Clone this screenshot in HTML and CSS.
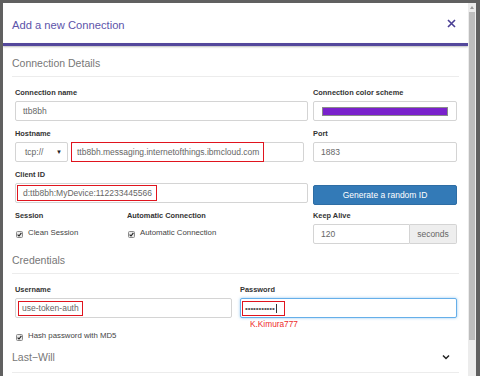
FILE: index.html
```html
<!DOCTYPE html>
<html lang="en">
  <head>
    <meta charset="UTF-8" />
    <title>Add a new Connection</title>
    <link rel="stylesheet" href="styles.css">
  </head>
  <body>
    <div class="window">
      <div class="modal">
        <div class="modal-header">
          <span class="title">Add a new Connection</span>
          <svg class="close" width="9" height="9" viewBox="0 0 9 9">
            <path d="M1 1L8 8M8 1L1 8" stroke="#4a3f94" stroke-width="1.6" fill="none" />
          </svg>
        </div>
        <div class="header-bar"></div>

        <div class="modal-body">
          <div class="section-title first">Connection Details</div>

          <div class="form details">
            <div class="row">
              <div class="group">
                <div class="label">Connection name</div>
                <div class="field">ttb8bh</div>
              </div>
              <div class="group">
                <div class="label">Connection color scheme</div>
                <div class="field color-field"><span class="swatch"></span></div>
              </div>
            </div>

            <div class="row">
              <div class="group">
                <div class="label">Hostname</div>
                <div class="host-line">
                  <div class="field select">tcp://<span class="caret">▼</span></div>
                  <div class="field host">
                    <span class="mark mark-host">ttb8bh.messaging.internetofthings.ibmcloud.com</span>
                  </div>
                </div>
              </div>
              <div class="group">
                <div class="label">Port</div>
                <div class="field">1883</div>
              </div>
            </div>

            <div class="row">
              <div class="group">
                <div class="label">Client ID</div>
                <div class="field client">
                  <span class="mark mark-client">d:ttb8bh:MyDevice:112233445566</span>
                </div>
              </div>
              <div class="group">
                <button class="btn-generate">Generate a random ID</button>
              </div>
            </div>

            <div class="row last">
              <div class="session-cols">
                <div class="group">
                  <div class="label">Session</div>
                  <div class="check-row">
                    <svg class="check" width="7" height="7" viewBox="0 0 7 7">
                      <rect x="0.5" y="0.5" width="6" height="6" rx="1" fill="#e9e9e9" stroke="#8a8a8a" />
                      <path d="M1.6 3.6L3 5L5.4 1.8" stroke="#222" stroke-width="1.1" fill="none" />
                    </svg>
                    Clean Session
                  </div>
                </div>
                <div class="group">
                  <div class="label">Automatic Connection</div>
                  <div class="check-row">
                    <svg class="check" width="7" height="7" viewBox="0 0 7 7">
                      <rect x="0.5" y="0.5" width="6" height="6" rx="1" fill="#e9e9e9" stroke="#8a8a8a" />
                      <path d="M1.6 3.6L3 5L5.4 1.8" stroke="#222" stroke-width="1.1" fill="none" />
                    </svg>
                    Automatic Connection
                  </div>
                </div>
              </div>
              <div class="group">
                <div class="label">Keep Alive</div>
                <div class="input-group">
                  <div class="field keep">120</div>
                  <div class="addon">seconds</div>
                </div>
              </div>
            </div>
          </div>

          <div class="section-title">Credentials</div>

          <div class="form credentials">
            <div class="row cred-row">
              <div class="group">
                <div class="label">Username</div>
                <div class="field user">
                  <span class="mark mark-user">use-token-auth</span>
                </div>
              </div>
              <div class="group">
                <div class="label">Password</div>
                <div class="field pass">
                  <span class="mark mark-pass">•••••••••••<span class="cursor"></span></span>
                </div>
                <div class="note">K.Kimura777</div>
              </div>
            </div>
            <div class="check-row hash">
              <svg class="check" width="7" height="7" viewBox="0 0 7 7">
                <rect x="0.5" y="0.5" width="6" height="6" rx="1" fill="#e9e9e9" stroke="#8a8a8a" />
                <path d="M1.6 3.6L3 5L5.4 1.8" stroke="#222" stroke-width="1.1" fill="none" />
              </svg>
              Hash password with MD5
            </div>
          </div>

          <div class="section-title collapse">
            <span>Last−Will</span>
            <svg width="8" height="6" viewBox="0 0 8 6">
              <path d="M1 1.5L4 4.5L7 1.5" stroke="#222" stroke-width="1.5" fill="none" />
            </svg>
          </div>
        </div>
      </div>

      <div class="scrollbar">
        <div class="scroll-up"><span class="arrow"></span></div>
        <div class="thumb"></div>
        <div class="track"></div>
      </div>
    </div>
  </body>
</html>
```

FILE: styles.css
```css
body {
  margin: 0;
  padding: 0;
  background-color: #606060;
  font-family: "Liberation Sans", Arial, sans-serif;
  overflow: hidden;
}

.window {
  display: flex;
  margin: 3px 4px 0 3px;
  height: 373px;
  background-color: #fff;
  overflow: hidden;
}

.modal {
  flex: 1;
  overflow: hidden;
}

.modal-header {
  box-sizing: border-box;
  height: 40px;
  display: flex;
  align-items: center;
  justify-content: space-between;
  padding: 4px 12px 0 9px;
}

.title {
  font-size: 11.2px;
  color: #5d54aa;
}

.close {
  display: block;
  margin-top: -4px;
}

.header-bar {
  height: 3px;
  background-color: #54489c;
  box-shadow: 0 1px 2px rgba(0, 0, 0, 0.25);
}

.modal-body {
  padding: 0 9px;
}

.section-title {
  font-size: 10.5px;
  line-height: 14px;
  color: #777;
  padding: 9px 0 6px;
  border-bottom: 1px solid #ececec;
}

.section-title.first {
  padding-top: 10px;
}

.collapse {
  display: flex;
  justify-content: space-between;
  align-items: center;
  padding: 9px 9px 8px 0;
}

.form {
  padding: 10px 2px 0 3px;
}

.form.details {
  padding-top: 11px;
}

.form.credentials {
  padding-top: 11px;
}

.row {
  display: grid;
  grid-template-columns: 293px 144px;
  column-gap: 5px;
}

.row.last {
  margin-top: -2px;
}

.cred-row {
  grid-template-columns: 1fr 1fr;
  column-gap: 8px;
}

.group {
  margin-bottom: 8px;
}

.row.last .group {
  margin-bottom: 0;
}

.label {
  font-size: 7.4px;
  font-weight: bold;
  line-height: 10px;
  color: #333;
  margin-bottom: 3px;
}

.field {
  box-sizing: border-box;
  display: flex;
  align-items: center;
  height: 20px;
  border: 1px solid #d4d4d4;
  border-radius: 2px;
  padding: 0 7px;
  font-size: 8.5px;
  color: #666;
  background-color: #fff;
}

.color-field {
  padding: 0 8px;
}

.swatch {
  flex: 1;
  height: 7px;
  background-color: #7a22cc;
  border: 1px solid #8a8a8a;
}

.host-line {
  display: flex;
  gap: 3px;
}

.select {
  width: 53px;
  padding: 0 0 0 9px;
  justify-content: space-between;
}

.caret {
  font-size: 6px;
  color: #222;
  margin-right: 5px;
}

.host {
  width: 233px;
  padding: 0;
  align-items: stretch;
}

.mark {
  border: 1.5px solid #e0141e;
  display: flex;
  align-items: center;
}

.mark-host {
  margin: -1px 0 -1px -1px;
  padding: 0 4px 0 5px;
}

.client {
  padding: 0 1px;
}

.mark-client {
  height: 16px;
  box-sizing: border-box;
  padding: 0 4px 0 5px;
}

.user {
  padding: 0 2px;
}

.mark-user {
  height: 15px;
  box-sizing: border-box;
  padding: 0 3px 0 3px;
}

.pass {
  padding: 0 1px;
  border-color: #66afe9;
  box-shadow: 0 0 3px rgba(102, 175, 233, 0.7);
}

.mark-pass {
  height: 15px;
  width: 43px;
  box-sizing: border-box;
  padding: 0 2px;
  font-size: 8px;
  color: #555;
  letter-spacing: -0.1px;
}

.cursor {
  display: inline-block;
  width: 1px;
  height: 9px;
  background-color: #333;
  margin-left: 1px;
}

.note {
  font-size: 8.3px;
  line-height: 10px;
  color: #ee2b2b;
  margin: 1px 0 0 10px;
}

.btn-generate {
  display: block;
  width: 100%;
  height: 20px;
  margin-top: 15px;
  border: 1px solid #2e6da4;
  border-radius: 2px;
  background-color: #337ab7;
  color: #fff;
  font-family: "Liberation Sans", Arial, sans-serif;
  font-size: 8.5px;
  padding: 0;
}

.session-cols {
  display: grid;
  grid-template-columns: 107px 181px;
  column-gap: 5px;
}

.check-row {
  display: flex;
  align-items: center;
  gap: 5px;
  font-size: 7.8px;
  line-height: 10px;
  color: #444;
  margin-top: 7px;
  padding-left: 1px;
}

.check {
  display: block;
  margin-top: 2px;
}

.hash {
  margin-top: -6px;
}

.input-group {
  display: flex;
}

.keep {
  flex: 1;
  border-radius: 2px 0 0 2px;
}

.addon {
  box-sizing: border-box;
  width: 47px;
  height: 20px;
  display: flex;
  align-items: center;
  justify-content: center;
  border: 1px solid #d4d4d4;
  border-left: none;
  border-radius: 0 2px 2px 0;
  background-color: #eee;
  font-size: 8.5px;
  color: #666;
}

.scrollbar {
  width: 8px;
  display: flex;
  flex-direction: column;
  background-color: #ececec;
}

.scroll-up {
  height: 9px;
  display: flex;
  align-items: center;
  justify-content: center;
}

.arrow {
  width: 0;
  height: 0;
  border-left: 2.5px solid transparent;
  border-right: 2.5px solid transparent;
  border-bottom: 3px solid #9a9a9a;
}

.thumb {
  height: 328px;
  margin: 0 1px;
  background-color: #bdbdbd;
}

.track {
  flex: 1;
}
```
